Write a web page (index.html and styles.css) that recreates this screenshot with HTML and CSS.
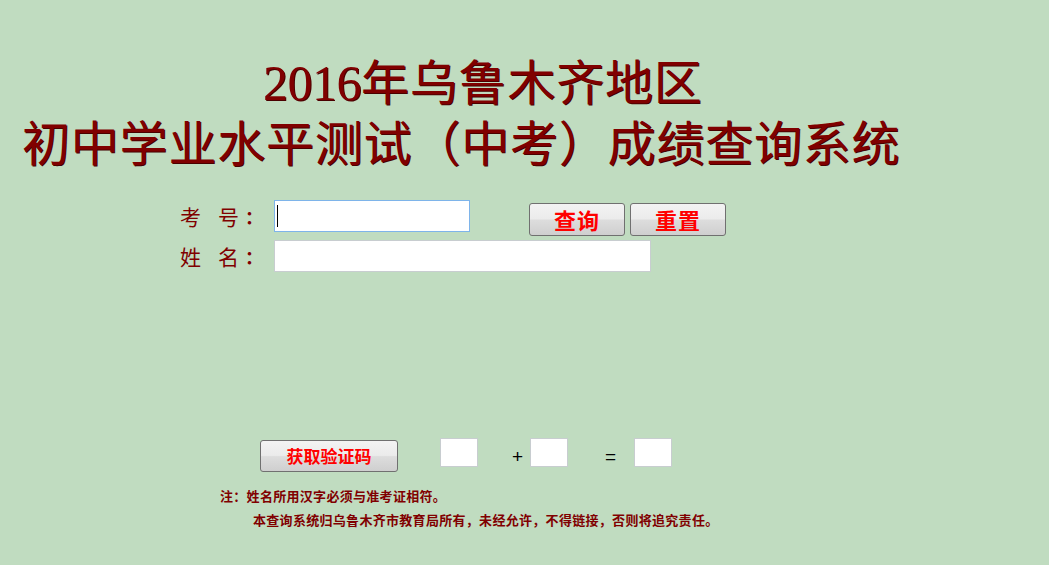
FILE: index.html
```html
<!DOCTYPE html>
<html lang="zh-CN">
<head>
<meta charset="utf-8">
<title>2016年乌鲁木齐地区初中学业水平测试（中考）成绩查询系统</title>
<link rel="stylesheet" href="styles.css">
</head>
<body>
<div class="page">
  <div class="title">
    <div class="title-line first"><span class="digits">2016</span>年乌鲁木齐地区</div>
    <div class="title-line second">初中学业水平测试（中考）成绩查询系统</div>
  </div>

  <div class="form">
    <div class="row">
      <label class="label"><span class="lc">考</span><span class="lc">号</span><span class="colon">：</span></label>
      <div class="field-wrap">
        <input class="field short focused" type="text">
        <span class="caret"></span>
      </div>
      <div class="buttons">
        <button class="btn big" type="button">查询</button>
        <button class="btn big" type="button">重置</button>
      </div>
    </div>
    <div class="row">
      <label class="label"><span class="lc">姓</span><span class="lc">名</span><span class="colon">：</span></label>
      <input class="field long" type="text">
    </div>
  </div>

  <div class="captcha">
    <button class="btn small" type="button">获取验证码</button>
    <input class="box b1" type="text">
    <span class="op plus">+</span>
    <input class="box" type="text">
    <span class="op eq">=</span>
    <input class="box" type="text">
  </div>

  <div class="notes">
    <div class="note n1">注：姓名所用汉字必须与准考证相符。</div>
    <div class="note n2">本查询系统归乌鲁木齐市教育局所有，未经允许，不得链接，否则将追究责任。</div>
  </div>
</div>
</body>
</html>
```

FILE: styles.css
```css
html, body {
  margin: 0;
  padding: 0;
  background: #c0dcc0;
}
body {
  font-family: "Liberation Serif", "Noto Sans CJK SC", serif;
  color: #800000;
}
.page {
  width: 1049px;
  height: 565px;
  overflow: hidden;
}
.title {
  padding-top: 52px;
}
.title-line {
  font-family: "Liberation Serif", "Noto Sans CJK SC", serif;
  font-size: 48px;
  line-height: 62px;
  height: 62px;
  color: #800000;
  text-shadow: 1px 1px 0 #4a0000;
  white-space: nowrap;
}
.digits {
  font-family: "Liberation Serif", serif;
  font-size: 50px;
  letter-spacing: -0.5px;
}
.title-line.first {
  padding-left: 263px;
  letter-spacing: 0.8px;
}
.title-line.second {
  padding-left: 22px;
  letter-spacing: 0.8px;
}
.form {
  margin-top: 24px;
  padding-left: 180px;
  display: flex;
  flex-direction: column;
  gap: 8px;
}
.row {
  display: flex;
  align-items: flex-start;
  height: 32px;
}
.label {
  width: 94px;
  height: 32px;
  display: flex;
  align-items: center;
  font-family: "Noto Sans CJK SC", serif;
  font-size: 21px;
  color: #800000;
}
.lc {
  width: 21px;
}
.lc + .lc {
  margin-left: 17px;
}
.colon {
  font-size: 18px;
  font-weight: bold;
  margin-left: 6px;
}
.field-wrap {
  position: relative;
  height: 32px;
}
.field {
  box-sizing: border-box;
  height: 32px;
  margin: 0;
  padding: 0 3px;
  border: 1px solid #c8cdd0;
  background: #fff;
  outline: none;
  font-size: 16px;
}
.field.short {
  width: 196px;
}
.field.long {
  width: 377px;
}
.field.focused {
  border-color: #7eb4ea;
}
.caret {
  position: absolute;
  left: 3px;
  top: 5px;
  width: 1px;
  height: 22px;
  background: #000;
}
.buttons {
  display: flex;
  gap: 5px;
  margin-left: 59px;
  margin-top: 3px;
}
.btn {
  box-sizing: border-box;
  margin: 0;
  padding: 0;
  border: 1px solid #707070;
  border-radius: 3px;
  background: linear-gradient(#f3f3f3 0%, #ebebeb 48%, #dddddd 52%, #cfcfcf 100%);
  color: #ff0000;
  font-family: "Noto Sans CJK SC", sans-serif;
  font-weight: bold;
  cursor: pointer;
}
.btn.big {
  width: 96px;
  height: 33px;
  font-size: 22px;
  line-height: 29px;
  letter-spacing: 1px;
}
.btn.small {
  width: 138px;
  height: 32px;
  font-size: 17px;
  line-height: 28px;
  margin-top: 2px;
}
.captcha {
  margin-top: 166px;
  padding-left: 260px;
  display: flex;
  align-items: flex-start;
  height: 34px;
}
.box {
  box-sizing: border-box;
  width: 38px;
  height: 29px;
  margin: 0;
  padding: 0;
  border: 1px solid #c8cdd0;
  background: #fff;
  outline: none;
  flex: none;
}
.b1 {
  margin-left: 42px;
}
.op {
  font-family: "Liberation Sans", sans-serif;
  font-size: 19px;
  line-height: 29px;
  height: 29px;
  color: #000;
  margin-top: 4px;
  flex: none;
}
.plus {
  margin-left: 34px;
  margin-right: 7px;
}
.eq {
  margin-left: 37px;
  margin-right: 18px;
}
.notes {
  margin-top: 12px;
  font-family: "Noto Sans CJK SC", sans-serif;
  font-size: 13px;
  font-weight: bold;
  letter-spacing: 0.3px;
  color: #800000;
}
.note {
  line-height: 24px;
  height: 24px;
  white-space: nowrap;
}
.n1 {
  padding-left: 220px;
}
.n2 {
  padding-left: 253px;
}
```
